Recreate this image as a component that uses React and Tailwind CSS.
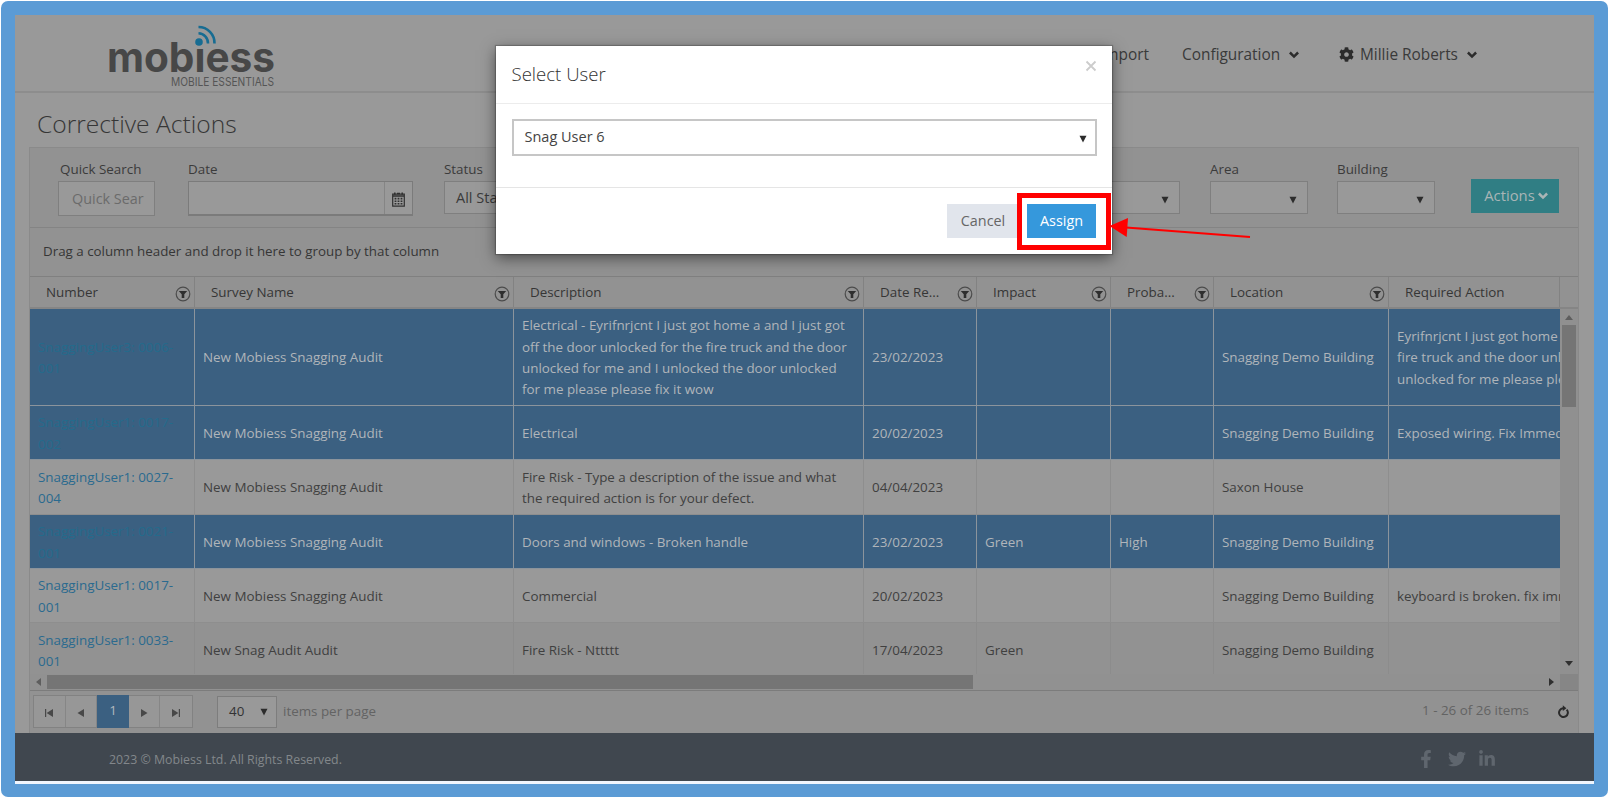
import React from "react";
import { FaCog, FaFacebookF, FaTwitter, FaLinkedinIn } from "react-icons/fa";

const COLS = "grid grid-cols-[165px_319px_350px_113px_134px_103px_175px_171px]";

const headers = [
  ["Number", true],
  ["Survey Name", true],
  ["Description", true],
  ["Date Re...", true],
  ["Impact", true],
  ["Proba...", true],
  ["Location", true],
  ["Required Action", false],
];

const rows = [
  {
    kind: "sel",
    h: "h-[97px]",
    cells: [
      ["SnaggingUser3: 0006-", "001"],
      ["New Mobiess Snagging Audit"],
      [
        "Electrical - Eyrifnrjcnt I just got home a and I just got",
        "off the door unlocked for the fire truck and the door",
        "unlocked for me and I unlocked the door unlocked",
        "for me please please fix it wow",
      ],
      ["23/02/2023"],
      [],
      [],
      ["Snagging Demo Building"],
      ["Eyrifnrjcnt I just got home a", "fire truck and the door unlocked", "unlocked for me please please"],
    ],
  },
  {
    kind: "sel",
    h: "h-[54px]",
    cells: [["SnaggingUser1: 0017-", "002"], ["New Mobiess Snagging Audit"], ["Electrical"], ["20/02/2023"], [], [], ["Snagging Demo Building"], ["Exposed wiring. Fix Immediately"]],
  },
  {
    kind: "plain",
    h: "h-[55px]",
    cells: [
      ["SnaggingUser1: 0027-", "004"],
      ["New Mobiess Snagging Audit"],
      ["Fire Risk - Type a description of the issue and what", "the required action is for your defect."],
      ["04/04/2023"],
      [],
      [],
      ["Saxon House"],
      [],
    ],
  },
  {
    kind: "sel",
    h: "h-[54px]",
    cells: [["SnaggingUser1: 0021-", "001"], ["New Mobiess Snagging Audit"], ["Doors and windows - Broken handle"], ["23/02/2023"], ["Green"], ["High"], ["Snagging Demo Building"], []],
  },
  {
    kind: "plain",
    h: "h-[54px]",
    cells: [["SnaggingUser1: 0017-", "001"], ["New Mobiess Snagging Audit"], ["Commercial"], ["20/02/2023"], [], [], ["Snagging Demo Building"], ["keyboard is broken. fix immediately"]],
  },
  {
    kind: "alt",
    h: "h-[55px]",
    cells: [["SnaggingUser1: 0033-", "001"], ["New Snag Audit Audit"], ["Fire Risk - Nttttt"], ["17/04/2023"], ["Green"], [], ["Snagging Demo Building"], []],
  },
];

const tone = {
  sel: { row: "bg-[#3b6081] text-[#b0b5ba] border-[#8b949c]", cell: "border-[#8b949c]", link: "text-[#246b8c]" },
  plain: { row: "bg-[#999999] text-[#404040] border-[#8e8e8e]", cell: "border-[#8e8e8e]", link: "text-[#2a6a8f]" },
  alt: { row: "bg-[#929292] text-[#404040] border-[#929292]", cell: "border-[#8c8c8c]", link: "text-[#2a6a8f]" },
};

function Caret({ className = "fill-[#2c2c2c]" }) {
  return (
    <svg width="8" height="8" viewBox="0 0 8 8" className={`shrink-0 ${className}`}>
      <path d="M0.5 0.8h7L4 7.4z" />
    </svg>
  );
}

function Chevron({ className }) {
  return (
    <svg width="10" height="8" viewBox="0 0 10 8" className={`shrink-0 ${className}`} fill="none" stroke="currentColor" strokeWidth="2.5">
      <path d="M.9 1.500L5 5.600l4.100-4.100" />
    </svg>
  );
}

function FilterIcon() {
  return (
    <svg width="16" height="16" viewBox="0 0 16 16" className="shrink-0">
      <circle cx="8" cy="8" r="6.800" fill="none" stroke="#4c4c4c" strokeWidth="1.200" />
      <path d="M3.800 4.900h8.400L9.300 8.300v3.600H6.700V8.300z" fill="#2e2e2e" />
    </svg>
  );
}

function Logo() {
  return (
    <svg width="166" height="64" viewBox="0 0 166 64">
      <g fontFamily="Inter, sans-serif">
        <text x="-2" y="47.500" fontSize="41" fontWeight="700" fill="#474747" textLength="168" lengthAdjust="spacingAndGlyphs">
          mob&#305;ess
        </text>
        <text x="62" y="61.500" fontSize="12" fill="#555555" textLength="103" lengthAdjust="spacingAndGlyphs">
          MOBILE ESSENTIALS
        </text>
      </g>
      <circle cx="90" cy="18" r="3.800" fill="#176c92" />
      <path d="M89.500 9.300A10 10 0 0 1 99 19.500" fill="none" stroke="#176c92" strokeWidth="2.600" />
      <path d="M89.500 3A16 16 0 0 1 105.500 19.500" fill="none" stroke="#176c92" strokeWidth="2.600" />
    </svg>
  );
}

function Field({ label, width, children }) {
  return (
    <div className={`flex shrink-0 flex-col ${width}`}>
      <span className="h-[23px] whitespace-nowrap pt-px text-[13.4px] leading-[20px] text-[#3b3b3b]">{label}</span>
      {children}
    </div>
  );
}

function Select({ text }) {
  return (
    <div className="flex h-[33px] w-[98px] items-center justify-between whitespace-nowrap border border-[#7f7f7f] bg-[#999999] pl-[11px] pr-[10px] text-[14.5px] text-[#3b3b3b]">
      <span>{text}</span>
      <span className="pt-[5px]">
        <Caret />
      </span>
    </div>
  );
}

function PageIcon({ d, last }) {
  return (
    <span className={`flex w-8 items-center justify-center ${last ? "" : "border-r border-[#868686]"}`}>
      <svg width="10" height="10" viewBox="0 0 10 10" fill="#484848" className="relative top-px">
        <path d={d} />
      </svg>
    </span>
  );
}

function Modal() {
  return (
    <div className="absolute left-[496px] top-[46px] flex h-[208px] w-[616px] flex-col bg-white shadow-[0_4px_14px_rgba(0,0,0,0.5),0_0_1px_1px_rgba(0,0,0,0.2)]">
      <div className="flex h-[58px] justify-between border-b border-[#ececec] pl-[15.5px] pr-[15px]">
        <h2 className="pt-[13px] text-[18.6px] font-light leading-[29px] text-[#333333]">Select User</h2>
        <svg width="12" height="12" viewBox="0 0 12 12" className="mt-[14px]" stroke="#cccccc" strokeWidth="1.800">
          <path d="M1.500 1.500l9 9M10.500 1.500l-9 9" />
        </svg>
      </div>
      <div className="h-[84px] border-b border-[#e5e5e5] px-[15.5px] pt-[15px]">
        <div className="flex h-[37px] items-center justify-between border-2 border-[#c6c6c6] pl-[11px] pr-[8px] text-[14.5px] text-[#444444]">
          <span className="relative -top-px">Snag User 6</span>
          <span className="pt-[2px]">
            <Caret />
          </span>
        </div>
      </div>
      <div className="flex flex-1 pl-[451px] pt-[16px] text-[14.4px]">
        <button className="h-[34px] w-[70px] bg-[#e1e5ec] pb-px pl-[2px] text-[#666666]">Cancel</button>
        <button className="ml-[10px] h-[34px] w-[69px] bg-[#3598dc] pb-px font-medium text-white">Assign</button>
      </div>
    </div>
  );
}

export default function App() {
  return (
    <div className="relative h-[797px] w-[1608px] overflow-hidden bg-white font-['Open_Sans',sans-serif] antialiased">
      <div className="h-full pl-px pt-px">
        <div className="h-[796px] w-[1607px] rounded-[7px] bg-[#5b9bd5] pl-[14px] pt-[14px]">
          <div className="flex h-[769px] w-[1579px] flex-col bg-[#f0f5fd]">
            <div className="flex h-[766px] flex-col bg-[#999999]">
              <header className="flex h-[78px] shrink-0 items-start border-b-2 border-[#8d8d8d] pl-[94px] pt-[9px] text-[15.4px] text-[#3a3a3a]">
                <Logo />
                <nav className="flex items-center pt-[17px] leading-[27px]">
                  <span className="ml-[809px] w-[65px] text-right">Import</span>
                  <span className="ml-[33px] w-[99px] whitespace-nowrap">Configuration</span>
                  <Chevron className="ml-[8px] text-[#2c2c2c]" />
                  <FaCog className="ml-[40px]" size={15} color="#2c2c2c" />
                  <span className="ml-[6px] w-[98px] whitespace-nowrap">Millie Roberts</span>
                  <Chevron className="ml-[9px] text-[#2c2c2c]" />
                </nav>
              </header>

              <h1 className="h-[54px] shrink-0 pl-[22px] pt-[14px] text-[24.6px] font-light leading-[34px] text-[#363636]">Corrective Actions</h1>

              <main className="ml-[14px] flex h-[586px] w-[1550px] shrink-0 flex-col border border-b-0 border-[#8a8a8a] bg-[#929292]">
                <section className="flex h-[80px] shrink-0 border-b border-[#848484] pl-[28px] pt-[10px]">
                  <Field label={<span className="pl-[2px]">Quick Search</span>} width="w-[130px]">
                    <div className="flex h-[35px] w-[97px] items-center overflow-hidden border border-[#7f7f7f] bg-[#999999] pl-[13px] text-[14.4px] text-[#6b6b6b]">
                      <span className="whitespace-nowrap">Quick Sear</span>
                    </div>
                  </Field>
                  <Field label="Date" width="w-[256px]">
                    <div className="flex h-[35px] w-[225px] border border-b-2 border-[#7b7b7b] bg-[#999999]">
                      <span className="flex-1" />
                      <span className="flex w-[28px] items-center justify-center border-l border-[#858585] pt-[3px]">
                        <svg width="13" height="15" viewBox="0 0 13 15">
                          <path d="M.7 2.2h11.6v12H.7z" fill="none" stroke="#303030" strokeWidth="1.2" />
                          <path d="M1 4h11M2.8.4v2.4M10.2.4v2.4M5 1.5h3" stroke="#303030" strokeWidth="1.5" />
                          <path d="M2.6 6.6h8M2.6 9.2h8M2.6 11.8h8" stroke="#303030" strokeWidth="1.6" strokeDasharray="1.8 1.2" />
                        </svg>
                      </span>
                    </div>
                  </Field>
                  <Field label="Status" width="w-[638px]">
                    <Select text="All Stat..." />
                  </Field>
                  <Field label="Site" width="w-[128px]">
                    <Select />
                  </Field>
                  <Field label="Area" width="w-[127px]">
                    <Select />
                  </Field>
                  <Field label="Building" width="w-[134px]">
                    <Select />
                  </Field>
                  <button className="mt-[21px] flex h-[34px] w-[88px] items-center justify-center gap-[3px] bg-[#307e84] pb-px pl-[2px] text-[14.8px] text-[#a9b5b6]">
                    Actions
                    <Chevron />
                  </button>
                </section>

                <div className="h-[49px] shrink-0 border-b border-[#808080] pl-[13px] pt-[12px] text-[13.35px] leading-[22px] text-[#363636]">
                  Drag a column header and drop it here to group by that column
                </div>

                <div className="flex h-[32px] shrink-0 border-b-2 border-[#858585]">
                  <div className={`${COLS} w-[1530px] shrink-0`}>
                    {headers.map(([name, filter]) => (
                      <div key={name} className="flex items-center justify-between border-r border-[#828282] pl-4 pr-[3px] text-[13.4px] text-[#363636]">
                        <span className="whitespace-nowrap pt-px">{name}</span>
                        {filter && (
                          <span className="pt-[3px]">
                            <FilterIcon />
                          </span>
                        )}
                      </div>
                    ))}
                  </div>
                </div>

                <div className="flex h-[382px] shrink-0 border-b border-[#7c7c7c]">
                  <div className="flex w-[1530px] shrink-0 flex-col">
                    <div className="h-[365px] overflow-hidden">
                      {rows.map((r, i) => (
                        <div key={i} className={`${COLS} ${r.h} border-b text-[13.4px] leading-[21.4px] ${tone[r.kind].row}`}>
                          {r.cells.map((lines, j) => (
                            <div
                              key={j}
                              className={`flex flex-col justify-center overflow-hidden whitespace-nowrap pl-2 pt-[2px] ${j < 7 ? `border-r ${tone[r.kind].cell}` : ""} ${j === 0 ? tone[r.kind].link : ""}`}
                            >
                              {lines.map((l) => (
                                <div key={l}>{l}</div>
                              ))}
                            </div>
                          ))}
                        </div>
                      ))}
                    </div>
                    <div className="flex flex-1 items-center justify-between bg-[#919191] pl-[6px] pr-[6px]">
                      <svg width="5" height="8" viewBox="0 0 5 8" fill="#5e5e5e">
                        <path d="M5 0v8L0 4z" />
                      </svg>
                      <div className="ml-[6px] h-[14px] w-[926px] bg-[#757575]" />
                      <span className="flex-1" />
                      <svg width="5" height="8" viewBox="0 0 5 8" fill="#303030">
                        <path d="M0 0v8l5-4z" />
                      </svg>
                    </div>
                  </div>
                  <div className="flex w-[18px] flex-col items-center bg-[#909090]">
                    <svg width="8" height="5" viewBox="0 0 8 5" fill="#5e5e5e" className="mt-[6px]">
                      <path d="M0 5h8L4 0z" />
                    </svg>
                    <div className="mt-[5px] h-[82px] w-[14px] bg-[#757575]" />
                    <span className="flex-1" />
                    <svg width="8" height="5" viewBox="0 0 8 5" fill="#303030" className="mb-[8px]">
                      <path d="M0 0h8L4 5z" />
                    </svg>
                    <div className="h-[16px] w-full bg-[#868686]" />
                  </div>
                </div>

                <div className="flex h-[41px] items-center bg-[#929292] pl-[3px] text-[13.4px]">
                  <div className="flex h-[33px] w-[160px] border border-[#828282] bg-[#979797]">
                    <PageIcon d="M1 1h1.200v8H1zM9 1v8L2.600 5z" />
                    <PageIcon d="M8 1v8L1.500 5z" />
                    <span className="-my-px flex w-8 items-center justify-center bg-[#3b6081] pb-[2px] text-[#b0b8be]">1</span>
                    <PageIcon d="M2 1v8l6.500-4z" />
                    <PageIcon d="M7.800 1H9v8H7.800zM1 1v8l6.400-4z" last />
                  </div>
                  <div className="ml-[24px] flex h-[32px] w-[60px] items-center justify-between border border-[#7d7d7d] bg-[#999999] pl-[11px] pr-[8px] text-[#333333]">
                    40
                    <Caret />
                  </div>
                  <span className="ml-[6px] text-[#636363]">items per page</span>
                  <span className="ml-auto pb-[3px] text-[#636363]">1 - 26 of 26 items</span>
                  <svg width="12" height="13" viewBox="0 0 12 13" className="ml-[28px] mr-[9px]">
                    <path d="M9.700 4.600A4.400 4.400 0 1 1 6 3.200h1" fill="none" stroke="#2a2a2a" strokeWidth="2" />
                    <path d="M5.800 .3L9.400 3.200 5.800 6z" fill="#2a2a2a" />
                  </svg>
                </div>
              </main>

              <footer className="flex flex-1 items-center bg-[#40474f] pl-[94px] pr-[98px] text-[#83878b]">
                <span className="pt-[6px] text-[12.35px]">2023 © Mobiess Ltd. All Rights Reserved.</span>
                <div className="ml-auto flex items-center gap-[12.5px] pt-[4px] text-[#5f666e]">
                  <FaFacebookF size={18} />
                  <FaTwitter size={18} />
                  <FaLinkedinIn size={18} />
                </div>
              </footer>
            </div>
          </div>
        </div>
      </div>

      <Modal />
      <div className="absolute left-[1017px] top-[193px] h-[57px] w-[94px] border-[5px] border-[#ff0000]" />
      <svg width="144" height="24" viewBox="0 0 144 24" className="absolute left-[1108px] top-[216px]">
        <path d="M18 11.500L142 21" stroke="#ff0000" strokeWidth="2" />
        <path d="M1.500 10L20 2l-1.300 19z" fill="#ff0000" />
      </svg>
    </div>
  );
}
